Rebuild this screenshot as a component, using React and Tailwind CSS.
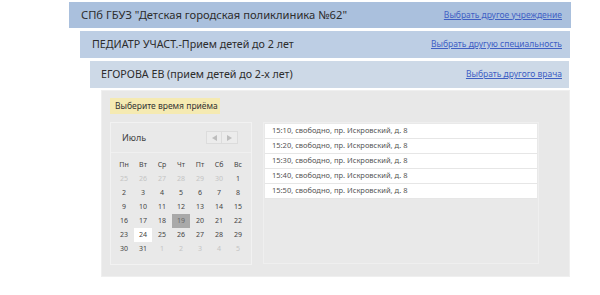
import React from "react";

const weeks = [
  [["25", 1], ["26", 1], ["27", 1], ["28", 1], ["29", 1], ["30", 1], ["1", 0]],
  [["2", 0], ["3", 0], ["4", 0], ["5", 0], ["6", 0], ["7", 0], ["8", 0]],
  [["9", 0], ["10", 0], ["11", 0], ["12", 0], ["13", 0], ["14", 0], ["15", 0]],
  [["16", 0], ["17", 0], ["18", 0], ["19", 2], ["20", 0], ["21", 0], ["22", 0]],
  [["23", 0], ["24", 3], ["25", 0], ["26", 0], ["27", 0], ["28", 0], ["29", 0]],
  [["30", 0], ["31", 0], ["1", 1], ["2", 1], ["3", 1], ["4", 1], ["5", 1]],
];

const days = ["Пн", "Вт", "Ср", "Чт", "Пт", "Сб", "Вс"];
const times = ["15:10", "15:20", "15:30", "15:40", "15:50"];

function Cell({ d, t }) {
  let cls = "h-[14px] w-[18px] flex items-center justify-center ";
  if (t === 1) cls += "text-[#c4c4c4]";
  else if (t === 2) cls += "bg-[#a9a9a9] text-[#666]";
  else if (t === 3) cls += "bg-white text-[#444]";
  else cls += "text-[#444]";
  return <div className={cls}>{d}</div>;
}

export default function App() {
  return (
    <div
      className="w-[600px] h-[295px] bg-white pl-[69px] pt-[2px] text-[#333]"
      style={{ fontFamily: '"Noto Sans", "Open Sans", sans-serif' }}
    >
      <div className="w-[502px] h-[26px] bg-[#aac0dd] flex items-center justify-between pl-[12px] pr-[9px]">
        <span className="text-[11.2px] text-[#2d2d2d]">СПб ГБУЗ "Детская городская поликлиника №62"</span>
        <a className="text-[8.5px] text-[#3f5fc4] underline">Выбрать другое учреждение</a>
      </div>
      <div className="mt-[3px] ml-[11px] w-[490px] h-[27px] bg-[#bdcee4] flex items-center justify-between pl-[12px] pr-[8px]">
        <span className="text-[10.7px] text-[#2d2d2d]">ПЕДИАТР УЧАСТ.-Прием детей до 2 лет</span>
        <a className="text-[8.5px] text-[#3f5fc4] underline">Выбрать другую специальность</a>
      </div>
      <div className="mt-[3px] ml-[21px] w-[479px] h-[27px] bg-[#cdd9e7] flex items-center justify-between pl-[11px] pr-[7px]">
        <span className="text-[10.7px] text-[#2d2d2d]">ЕГОРОВА ЕВ (прием детей до 2-х лет)</span>
        <a className="text-[8.5px] text-[#3f5fc4] underline">Выбрать другого врача</a>
      </div>
      <div className="mt-[2px] ml-[32px] w-[469px] h-[187px] bg-[#e8e8e8] border border-[#efefef] pl-[8px] pt-[7px]">
        <div className="w-[110px] h-[16px] bg-[#f5eab2] flex items-center pl-[5px] text-[8.5px] text-[#333]">
          Выберите время приёма
        </div>
        <div className="mt-[8px] flex items-start gap-[11px]">
          <div className="w-[142px] h-[143px] border border-[#f2f2f2] bg-[#e9e9e9] flex flex-col">
            <div className="h-[30px] flex items-center justify-between pl-[11px] pr-[13px] border-b border-[#f0f0f0]">
              <span className="text-[9px] text-[#444]">Июль</span>
              <div className="flex h-[13px] border border-[#dcdcdc] bg-[#ececec]">
                <div className="w-[15px] flex items-center justify-center border-r border-[#dcdcdc]">
                  <svg width="5" height="6" viewBox="0 0 5 6"><path d="M5 0 L0 3 L5 6 Z" fill="#bdbdbd" /></svg>
                </div>
                <div className="w-[15px] flex items-center justify-center">
                  <svg width="5" height="6" viewBox="0 0 5 6"><path d="M0 0 L5 3 L0 6 Z" fill="#bdbdbd" /></svg>
                </div>
              </div>
            </div>
            <div className="pl-[4px] pt-[6px] text-[7px]">
              <div className="grid grid-cols-[repeat(7,18px)] gap-x-[1px] h-[13px] items-center text-[#444]">
                {days.map((d) => (
                  <div key={d} className="flex justify-center">{d}</div>
                ))}
              </div>
              {weeks.map((w, i) => (
                <div key={i} className="grid grid-cols-[repeat(7,18px)] gap-x-[1px]">
                  {w.map(([d, t], j) => (
                    <Cell key={j} d={d} t={t} />
                  ))}
                </div>
              ))}
            </div>
          </div>
          <div className="w-[276px] h-[142px] border border-[#efefef] bg-[#e9e9e9] p-[1px]">
            {times.map((t) => (
              <div
                key={t}
                className="h-[15px] bg-white border-b border-[#e6e6e6] flex items-center pl-[7px] text-[7.5px] text-[#555]"
              >
                {t}, свободно, пр. Искровский, д. 8
              </div>
            ))}
          </div>
        </div>
      </div>
    </div>
  );
}
